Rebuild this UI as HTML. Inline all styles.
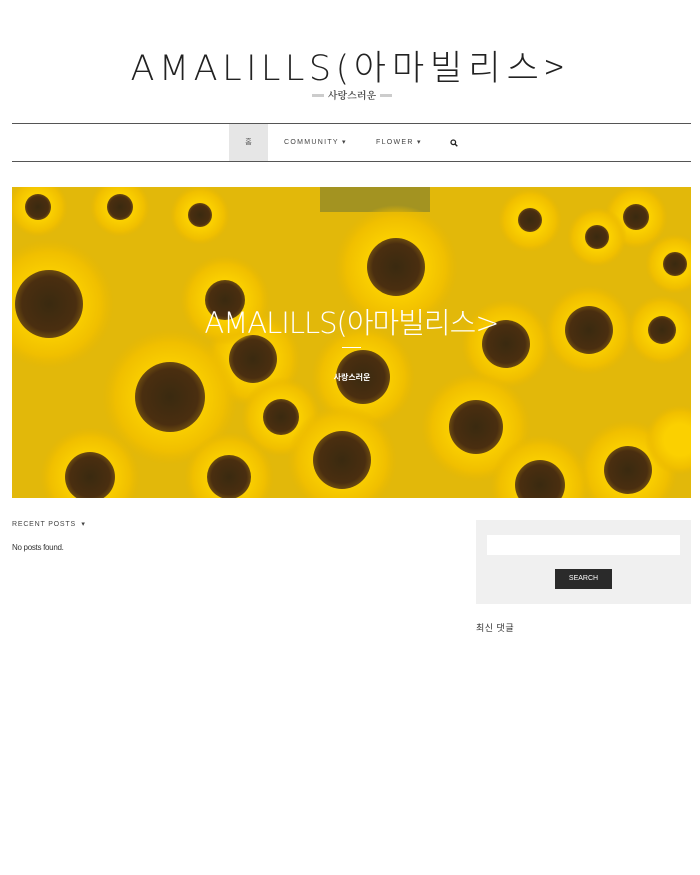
<!DOCTYPE html>
<html><head><meta charset="utf-8"><style>
body{margin:0;background:#fff;width:700px;height:875px;overflow:hidden;font-family:"Liberation Sans","Noto Sans CJK KR",sans-serif;position:relative}
.a{position:absolute}
</style></head><body>
<div class="a" style="left:0;width:700px;top:40px;text-align:center;font-size:35px;letter-spacing:4.5px;color:#222;white-space:nowrap"><span style="font-family:'DejaVu Sans','Liberation Sans',sans-serif;font-weight:200;">AMALILLS(</span><span style="font-family:'Noto Sans CJK KR',sans-serif;font-weight:300;letter-spacing:6px">아마빌리스&gt;</span></div>
<div class="a" style="left:312px;top:94px;width:12px;height:3px;background:#ccc"></div>
<div class="a" style="left:380px;top:94px;width:12px;height:3px;background:#ccc"></div>
<div class="a" style="left:316px;top:87px;width:72px;text-align:center;font-size:10px;color:#555;font-family:'Noto Serif CJK SC',serif;font-weight:bold;white-space:nowrap">사랑스러운</div>
<div class="a" style="left:12px;top:123px;width:679px;height:1px;background:#555"></div>
<div class="a" style="left:12px;top:161px;width:679px;height:1px;background:#555"></div>
<div class="a" style="left:229px;top:124px;width:39px;height:37px;background:#e6e6e6;text-align:center;line-height:37px;font-size:7px;color:#555">홈</div>
<div class="a" style="left:284px;top:138px;font-size:7px;letter-spacing:1.3px;color:#444">COMMUNITY ▾</div>
<div class="a" style="left:376px;top:138px;font-size:7px;letter-spacing:1.3px;color:#444">FLOWER ▾</div>
<svg class="a" style="left:450px;top:139px" width="8" height="8" viewBox="0 0 8 8"><circle cx="3.3" cy="3.3" r="2.3" fill="none" stroke="#222" stroke-width="1.3"/><path d="M5 5L7.3 7.3" stroke="#222" stroke-width="1.4"/></svg>
<svg class="a" style="left:12px;top:187px" width="679" height="311" viewBox="12 187 679 311">
<defs><radialGradient id="p"><stop offset="0.45" stop-color="#fbd000"/><stop offset="0.8" stop-color="#f0bf00"/><stop offset="1" stop-color="#e8b800" stop-opacity="0"/></radialGradient>
<radialGradient id="c"><stop offset="0" stop-color="#3a2a10"/><stop offset="0.8" stop-color="#4a2e10"/><stop offset="1" stop-color="#6b4a10"/></radialGradient></defs>
<rect x="12" y="187" width="679" height="311" fill="#e2b80a"/>
<rect x="320" y="187" width="110" height="25" fill="#7a7a30" opacity="0.6"/>
<g>
<g transform="translate(38,207)"><circle r="30" fill="url(#p)"/><circle r="13" fill="url(#c)"/></g>
<g transform="translate(120,207)"><circle r="30" fill="url(#p)"/><circle r="13" fill="url(#c)"/></g>
<g transform="translate(200,215)"><circle r="30" fill="url(#p)"/><circle r="12" fill="url(#c)"/></g>
<g transform="translate(636,217)"><circle r="32" fill="url(#p)"/><circle r="13" fill="url(#c)"/></g>
<g transform="translate(597,237)"><circle r="30" fill="url(#p)"/><circle r="12" fill="url(#c)"/></g>
<g transform="translate(675,264)"><circle r="30" fill="url(#p)"/><circle r="12" fill="url(#c)"/></g>
<g transform="translate(530,220)"><circle r="32" fill="url(#p)"/><circle r="12" fill="url(#c)"/></g>
<g transform="translate(662,330)"><circle r="35" fill="url(#p)"/><circle r="14" fill="url(#c)"/></g>
<g transform="translate(589,330)"><circle r="45" fill="url(#p)"/><circle r="24" fill="url(#c)"/></g>
<g transform="translate(506,344)"><circle r="45" fill="url(#p)"/><circle r="24" fill="url(#c)"/></g>
<g transform="translate(253,359)"><circle r="48" fill="url(#p)"/><circle r="24" fill="url(#c)"/></g>
<g transform="translate(225,300)"><circle r="45" fill="url(#p)"/><circle r="20" fill="url(#c)"/></g>
<g transform="translate(396,267)"><circle r="62" fill="url(#p)"/><circle r="29" fill="url(#c)"/></g>
<g transform="translate(363,377)"><circle r="52" fill="url(#p)"/><circle r="27" fill="url(#c)"/></g>
<g transform="translate(281,417)"><circle r="40" fill="url(#p)"/><circle r="18" fill="url(#c)"/></g>
<g transform="translate(49,304)"><circle r="65" fill="url(#p)"/><circle r="34" fill="url(#c)"/></g>
<g transform="translate(476,427)"><circle r="55" fill="url(#p)"/><circle r="27" fill="url(#c)"/></g>
<g transform="translate(628,470)"><circle r="50" fill="url(#p)"/><circle r="24" fill="url(#c)"/></g>
<g transform="translate(170,397)"><circle r="68" fill="url(#p)"/><circle r="35" fill="url(#c)"/></g>
<g transform="translate(342,460)"><circle r="55" fill="url(#p)"/><circle r="29" fill="url(#c)"/></g>
<g transform="translate(90,477)"><circle r="50" fill="url(#p)"/><circle r="25" fill="url(#c)"/></g>
<g transform="translate(229,477)"><circle r="45" fill="url(#p)"/><circle r="22" fill="url(#c)"/></g>
<g transform="translate(540,485)"><circle r="50" fill="url(#p)"/><circle r="25" fill="url(#c)"/></g>
<g transform="translate(680,440)"><circle r="35" fill="url(#p)"/></g>
</g>
</svg>
<div class="a" style="left:0;width:703px;top:300px;text-align:center;font-size:29px;color:#fff;white-space:nowrap;font-family:'DejaVu Sans','Noto Sans CJK KR',sans-serif;font-weight:200;letter-spacing:-1px">AMALILLS(아마빌리스&gt;</div>
<div class="a" style="left:342px;top:347px;width:19px;height:1px;background:#fff"></div>
<div class="a" style="left:320px;top:372px;width:64px;text-align:center;font-size:8px;color:#fff;font-weight:bold">사랑스러운</div>
<div class="a" style="left:12px;top:520px;font-size:7px;letter-spacing:0.8px;color:#444">RECENT POSTS &nbsp;▾</div>
<div class="a" style="left:12px;top:543px;font-size:8px;color:#333;letter-spacing:-0.3px">No posts found.</div>
<div class="a" style="left:476px;top:520px;width:215px;height:84px;background:#f0f0f0"></div>
<div class="a" style="left:487px;top:535px;width:193px;height:20px;background:#fff"></div>
<div class="a" style="left:555px;top:569px;width:57px;height:20px;background:#2a2a2a;color:#fff;font-size:7px;text-align:center;line-height:20px">SEARCH</div>
<div class="a" style="left:476px;top:621px;font-size:9px;color:#333;letter-spacing:0.5px">최신 댓글</div>
</body></html>
